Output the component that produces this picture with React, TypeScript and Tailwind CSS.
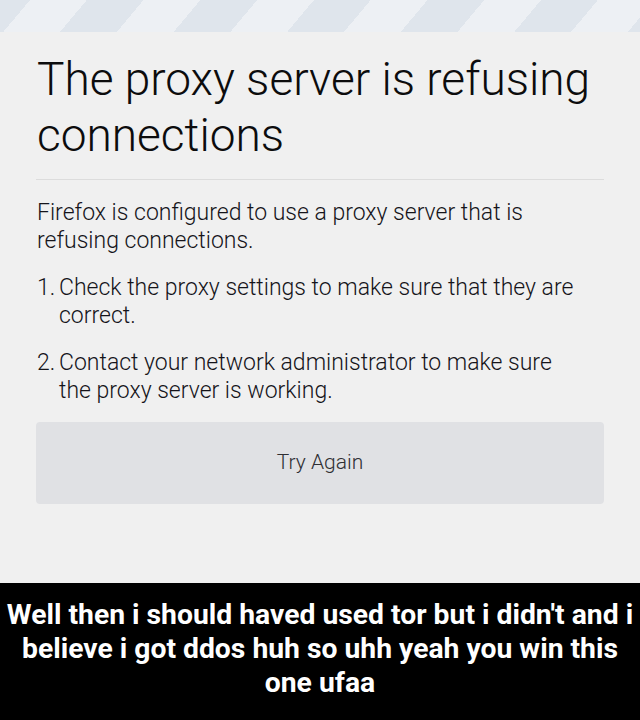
export default function App() {
  return (
    <div className="w-[640px] h-[720px] flex flex-col bg-[#f0f0f0] overflow-hidden font-['Roboto','Noto_Sans',sans-serif]">
      <div className="h-[32px] shrink-0 bg-[repeating-linear-gradient(130deg,#dfe5ec_0px,#dfe5ec_23px,#edf0f4_23px,#edf0f4_66.5px,#dfe5ec_66.5px,#dfe5ec_87px)]" />
      <main className="flex-1 flex flex-col px-[36px] pt-[19px]">
        <h1 className="text-[46px] leading-[56px] font-light text-[#0c0c0d] pl-[1px]">
          The proxy server is refusing connections
        </h1>
        <div className="mt-[16px] h-px bg-[#dcdcdc]" />
        <div className="pl-[1px] pr-[22px] text-[23px] leading-[28px] font-light text-[#15141a]">
          <p className="mt-[19px]">
            Firefox is configured to use a proxy server that is refusing connections.
          </p>
          <ol className="mt-[19px] flex flex-col gap-[19px]">
            <li className="flex">
              <span className="w-[22px] shrink-0">1.</span>
              <span>Check the proxy settings to make sure that they are correct.</span>
            </li>
            <li className="flex">
              <span className="w-[22px] shrink-0">2.</span>
              <span>Contact your network administrator to make sure the proxy server is working.</span>
            </li>
          </ol>
        </div>
        <button className="mt-[17px] h-[82px] w-full rounded-[4px] bg-[#e0e1e4] text-[21px] font-light text-[#2f2f33]">
          Try Again
        </button>
      </main>
      <footer className="h-[137px] shrink-0 bg-black px-[3px] pt-[15px] text-center text-[28.3px] leading-[34px] font-bold text-white">
        Well then i should haved used tor but i didn't and i believe i got ddos huh so uhh yeah you win this one ufaa
      </footer>
    </div>
  );
}
